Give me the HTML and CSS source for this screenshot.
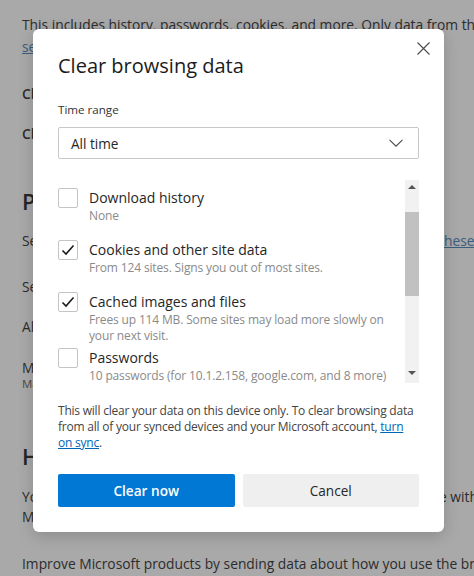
FILE: index.html
```html
<!DOCTYPE html>
<html lang="en">
<head>
    <meta charset="UTF-8">
    <meta name="viewport" content="width=device-width, initial-scale=1.0">
    <title>Settings - Clear browsing data</title>
    <link rel="stylesheet" href="styles.css">
</head>
<body>
    <div class="page">
        <p class="line">This includes history, passwords, cookies, and more. Only data from this profile will be deleted.</p>
        <p class="line l2"><a href="#" class="page-link">see more</a></p>
        <p class="line strong l3">Clear browsing data now</p>
        <p class="line strong l4">Choose what to clear every time you close the browser</p>

        <h2 class="section s1">Privacy</h2>
        <div class="line row l5">
            <span class="lead">Select your privacy settings for Microsoft Edge. Learn more about</span>
            <a href="#" class="page-link">these settings</a>
        </div>
        <p class="line l6">Send "Do Not Track" requests</p>
        <p class="line l7">Allow sites to check if you have payment methods saved</p>
        <p class="line tight l8">Manage certificates</p>
        <p class="line small">Manage HTTPS/SSL certificates and settings</p>

        <h2 class="section s2">Help improve Microsoft Edge</h2>
        <div class="line row l9">
            <span class="lead">You are in control of your data and the data you shar</span>
            <span>e with Microsoft</span>
        </div>
        <p class="line">Microsoft to improve the browser.</p>
        <p class="line l10">Improve Microsoft products by sending data about how you use the browser</p>
    </div>

    <div class="dialog">
        <button class="close" aria-label="Close">
            <svg width="13" height="13" viewBox="0 0 13 13"><path d="M0.5 0.5L12.5 12.5M12.5 0.5L0.5 12.5" stroke="#4a4a4a" stroke-width="1.1" fill="none"/></svg>
        </button>

        <h1 class="title">Clear browsing data</h1>

        <label class="field-label">Time range</label>
        <div class="select">
            <span>All time</span>
            <svg width="14" height="8" viewBox="0 0 14 8"><path d="M0.5 0.8L7 7.2L13.5 0.8" stroke="#4a4a4a" stroke-width="1.1" fill="none"/></svg>
        </div>

        <div class="list-wrap">
            <div class="list">
                <div class="item">
                    <span class="box"></span>
                    <div class="item-text">
                        <div class="item-title">Download history</div>
                        <div class="item-sub">None</div>
                    </div>
                </div>
                <div class="item">
                    <span class="box">
                        <svg width="14" height="12" viewBox="0 0 14 12"><path d="M1.5 6.5L5 10L12.5 1.5" stroke="#1a1a1a" stroke-width="1.6" fill="none"/></svg>
                    </span>
                    <div class="item-text">
                        <div class="item-title">Cookies and other site data</div>
                        <div class="item-sub">From 124 sites. Signs you out of most sites.</div>
                    </div>
                </div>
                <div class="item">
                    <span class="box">
                        <svg width="14" height="12" viewBox="0 0 14 12"><path d="M1.5 6.5L5 10L12.5 1.5" stroke="#1a1a1a" stroke-width="1.6" fill="none"/></svg>
                    </span>
                    <div class="item-text">
                        <div class="item-title">Cached images and files</div>
                        <div class="item-sub">Frees up 114 MB. Some sites may load more slowly on your next visit.</div>
                    </div>
                </div>
                <div class="item">
                    <span class="box"></span>
                    <div class="item-text">
                        <div class="item-title">Passwords</div>
                        <div class="item-sub">10 passwords (for 10.1.2.158, google.com, and 8 more)</div>
                    </div>
                </div>
            </div>
            <div class="scrollbar">
                <span class="arrow up"></span>
                <span class="thumb"></span>
                <span class="arrow down"></span>
            </div>
        </div>

        <p class="note">This will clear your data on this device only. To clear browsing data from all of your synced devices and your Microsoft account, <a href="#">turn on sync</a>.</p>

        <div class="actions">
            <button class="btn primary">Clear now</button>
            <button class="btn">Cancel</button>
        </div>
    </div>
</body>
</html>
```

FILE: styles.css
```css
html, body {
    margin: 0;
    height: 100%;
    overflow: hidden;
}
body {
    font-family: "Open Sans", "Noto Sans", sans-serif;
    background-color: #a9a9a9;
    color: #2c2c2c;
}

/* settings page behind the overlay */
.page {
    padding: 15px 0 0 22px;
    white-space: nowrap;
}
.line {
    margin: 0;
    font-size: 13.8px;
    line-height: 20px;
}
.strong {
    font-weight: 600;
}
.tight {
    line-height: 18px;
}
.small {
    font-size: 11.5px;
    line-height: 14px;
    color: #4a4a4a;
}
.page-link {
    color: #3b5d7e;
}
.row {
    display: flex;
}
.lead {
    flex: none;
    width: 417px;
    overflow: hidden;
}
.section {
    margin: 0;
    font-size: 22px;
    line-height: 30px;
    font-weight: 600;
    color: #262626;
}
.l2 { margin-top: 2px; }
.l3 { margin-top: 27px; }
.l4 { margin-top: 20px; }
.s1 { margin-top: 42px; }
.l5 { margin-top: 15px; }
.l6 { margin-top: 26px; }
.l7 { margin-top: 20px; }
.l8 { margin-top: 22px; }
.s2 { margin-top: 50px; }
.l9 { margin-top: 16px; }
.l10 { margin-top: 27px; }

/* dialog */
.dialog {
    position: absolute;
    left: 33px;
    top: 29px;
    width: 361px;
    padding: 23px 25px 25px 25px;
    background: white;
    border-radius: 6px;
    box-shadow: 0 4px 16px rgba(0,0,0,0.18);
    color: #262626;
}
.close {
    position: absolute;
    top: 5px;
    right: 7px;
    width: 28px;
    height: 28px;
    border: none;
    background: none;
    padding: 0;
    display: flex;
    align-items: center;
    justify-content: center;
}
.title {
    margin: 0;
    font-size: 20px;
    line-height: 28px;
    font-weight: 400;
    color: #1b1b1b;
}
.field-label {
    display: block;
    margin-top: 21px;
    font-size: 11.6px;
    line-height: 18px;
    color: #333;
}
.select {
    margin-top: 8px;
    height: 30px;
    border: 1px solid #c8c8c8;
    border-radius: 2px;
    display: flex;
    align-items: center;
    justify-content: space-between;
    padding: 0 15px 0 12px;
    font-size: 13.6px;
}
.list-wrap {
    margin-top: 21px;
    height: 203px;
    display: flex;
    gap: 4px;
}
.list {
    flex: 1;
    padding-top: 8px;
    overflow: hidden;
}
.item {
    display: flex;
    gap: 11px;
    min-height: 48px;
    margin-bottom: 4px;
}
.box {
    flex: none;
    width: 18px;
    height: 18px;
    border: 1px solid #c4c4c4;
    border-radius: 2px;
    display: flex;
    align-items: center;
    justify-content: center;
}
.item-title {
    font-size: 14px;
    line-height: 20px;
}
.item-sub {
    font-size: 12px;
    line-height: 16px;
    letter-spacing: -0.15px;
    color: #8a8a8a;
}
.scrollbar {
    flex: none;
    width: 14px;
    background: #f1f1f1;
    display: flex;
    flex-direction: column;
    align-items: center;
}
.arrow {
    width: 0;
    height: 0;
    border-left: 4px solid transparent;
    border-right: 4px solid transparent;
}
.arrow.up {
    margin-top: 5px;
    border-bottom: 4px solid #555;
}
.arrow.down {
    margin-top: auto;
    margin-bottom: 8px;
    border-top: 4px solid #555;
}
.thumb {
    margin-top: 23px;
    width: 14px;
    height: 84px;
    background: #c1c1c1;
}
.note {
    margin: 20px 0 0 0;
    font-size: 12px;
    line-height: 16px;
    letter-spacing: -0.22px;
    color: #444;
}
.note a {
    color: #0067b8;
}
.actions {
    margin-top: 23px;
    display: grid;
    grid-template-columns: 1fr 1fr;
    gap: 8px;
}
.btn {
    height: 33px;
    border: none;
    border-radius: 2px;
    background: #efefef;
    color: #262626;
    font-family: inherit;
    font-size: 13.6px;
}
.btn.primary {
    background: #0078d4;
    color: white;
    font-weight: 600;
}
```
